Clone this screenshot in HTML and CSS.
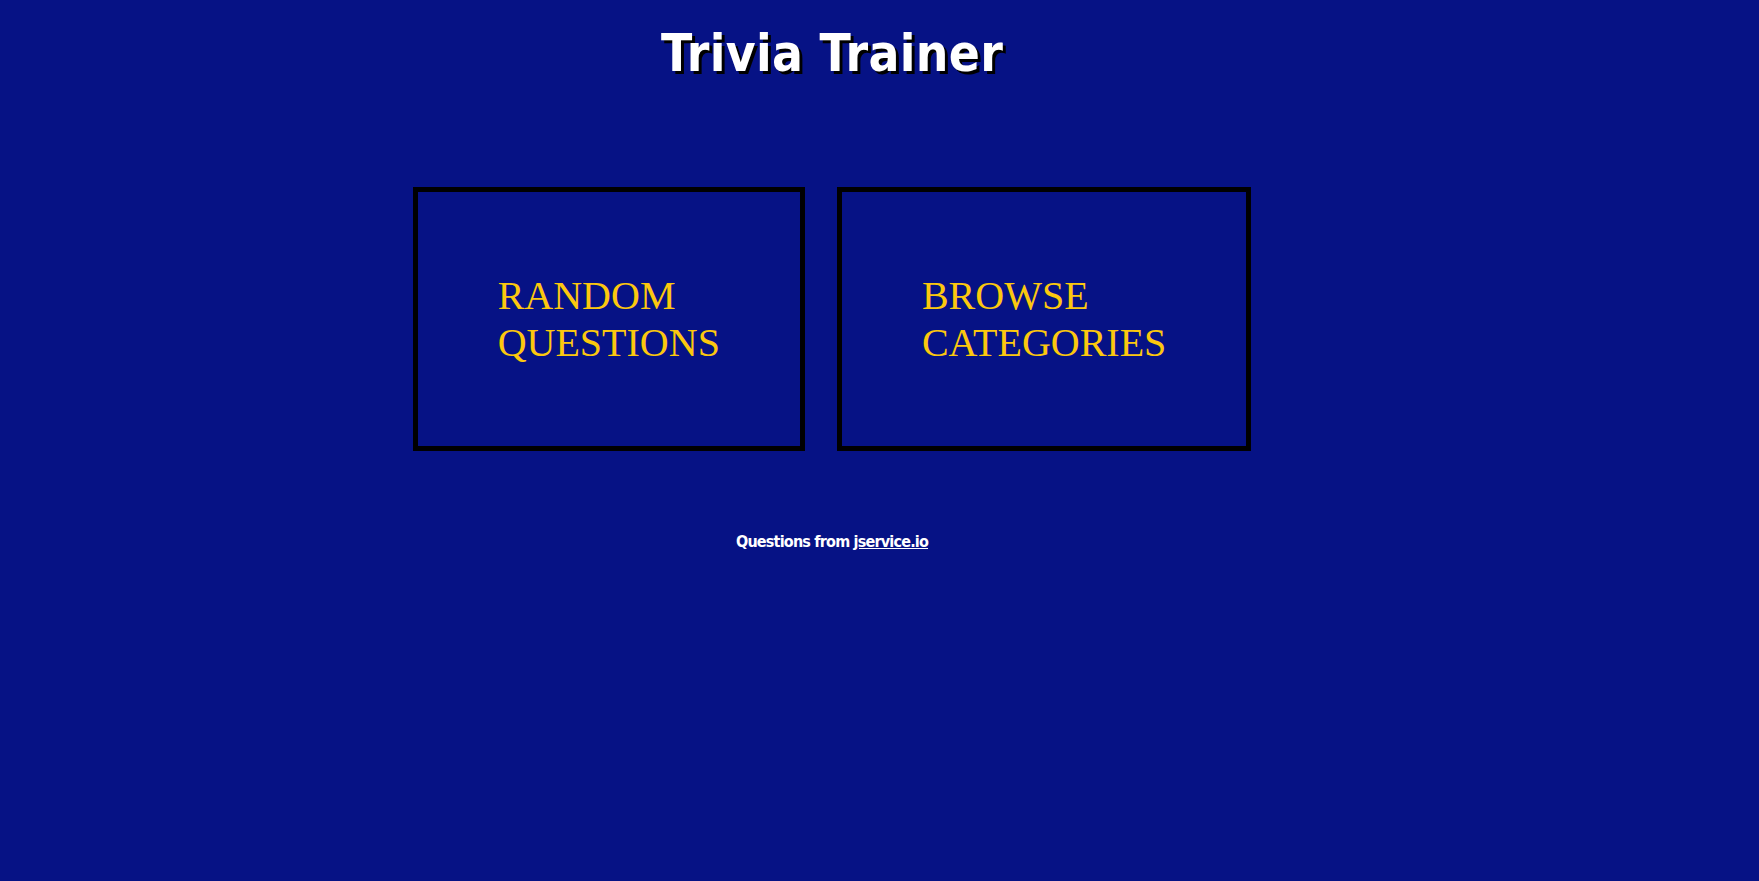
FILE: index.html
```html
<!DOCTYPE html>
<html lang="en">
<head>
<meta charset="utf-8">
<title>Trivia Trainer</title>
<link rel="stylesheet" href="styles.css">
</head>
<body>
<div class="wrapper">
  <h1 class="title">Trivia Trainer</h1>
  <div class="menu">
    <a class="menu-box" href="#">RANDOM<br>QUESTIONS</a>
    <a class="menu-box" href="#">BROWSE<br>CATEGORIES</a>
  </div>
  <p class="credit">Questions from <a class="credit-link" href="#">jservice.io</a></p>
</div>
</body>
</html>
```

FILE: styles.css
```css
html, body {
  margin: 0;
  padding: 0;
  background: #061285;
  height: 100%;
}

.wrapper {
  width: 1664px;
  padding-top: 22px;
  display: flex;
  flex-direction: column;
  align-items: center;
}

.title {
  margin: 0;
  font-family: "DejaVu Sans", sans-serif;
  font-stretch: condensed;
  font-weight: bold;
  font-size: 51px;
  line-height: 64px;
  letter-spacing: 0.3px;
  color: #ffffff;
  text-shadow: 3px 3px 0 #000000;
}

.menu {
  margin-top: 101px;
  display: flex;
  gap: 32px;
}

.menu-box {
  display: block;
  border: 5px solid #000000;
  padding: 80px;
  font-family: "Liberation Serif", "Times New Roman", serif;
  font-size: 40px;
  line-height: 47px;
  color: #fcc80e;
  text-decoration: none;
}

.credit {
  margin: 80px 0 0;
  font-family: "DejaVu Sans", sans-serif;
  font-stretch: condensed;
  font-weight: bold;
  font-size: 16px;
  line-height: 21px;
  letter-spacing: -0.8px;
  color: #ffffff;
}

.credit-link {
  color: #ffffff;
}
```
